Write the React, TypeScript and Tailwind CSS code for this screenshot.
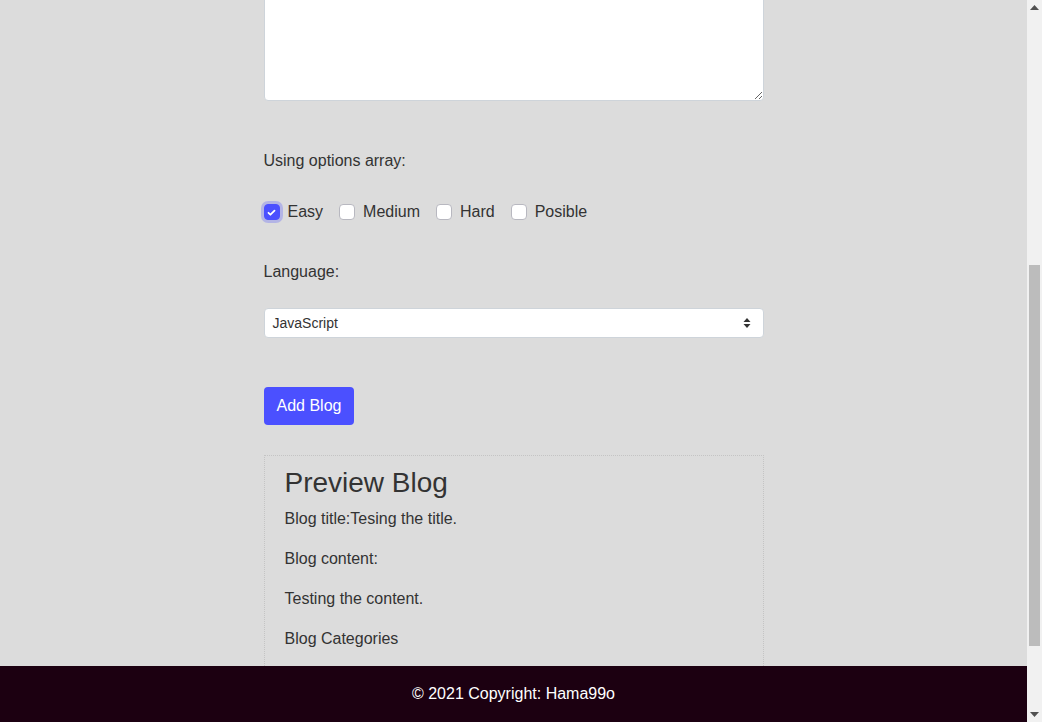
import React, { useLayoutEffect } from "react";

function Check({ checked, label }: { checked?: boolean; label: string }) {
  return (
    <label className="flex items-center mr-4">
      {checked ? (
        <span className="w-4 h-4 rounded-[4px] bg-[#4b50ff] border border-[#4b50ff] shadow-[0_0_0_3px_rgba(75,80,255,0.28)] flex items-center justify-center">
          <svg width="11" height="11" viewBox="0 0 20 20">
            <path d="M4.5 10.5l3.5 3.5 7.5-7.5" fill="none" stroke="#fff" strokeWidth="3.2" strokeLinecap="round" strokeLinejoin="round" />
          </svg>
        </span>
      ) : (
        <span className="w-4 h-4 rounded-[4px] bg-white border border-[#b8b8c0]" />
      )}
      <span className="ml-2">{label}</span>
    </label>
  );
}

export default function App() {
  useLayoutEffect(() => {
    window.scrollTo(0, 474);
  }, []);
  return (
    <div
      className="min-h-screen bg-[#dcdcdc] text-[#333333] text-base leading-6"
      style={{ fontFamily: '"Liberation Sans", Arial, sans-serif' }}
    >
      <div className="w-[1027px]">
        <div className="w-[500px] mx-auto pt-[40px] pb-[59px]">
          <h2 className="text-[28px] leading-[34px] mb-6">Add a New Blog</h2>
          <div className="mb-2">Blog title:</div>
          <input
            className="block w-full h-[38px] bg-white border border-[#ced4da] rounded-[4px] px-3 mb-6"
            defaultValue="Tesing the title."
          />
          <div className="mb-2">Blog content:</div>
          <textarea
            className="block w-full h-[351px] bg-white border border-[#ced4da] rounded-[4px] px-3 py-2"
            defaultValue=""
          />
          <div className="mt-[48px]">Using options array:</div>
          <div className="flex items-center mt-[27px]">
            <Check checked label="Easy" />
            <Check label="Medium" />
            <Check label="Hard" />
            <Check label="Posible" />
          </div>
          <div className="mt-[36px]">Language:</div>
          <div className="mt-[24px] h-[30px] bg-white border border-[#ced4da] rounded-[4px] flex items-center justify-between pl-2 pr-[12px] text-[14px]">
            <span>JavaScript</span>
            <svg width="8" height="12" viewBox="0 0 8 12">
              <path d="M4 1L7.5 5H0.5Z" fill="#333" />
              <path d="M4 11L7.5 7H0.5Z" fill="#333" />
            </svg>
          </div>
          <button className="mt-[49px] h-[38px] px-[13px] bg-[#4b50ff] text-white rounded-[4px] block">
            Add Blog
          </button>
          <div className="mt-[30px] border border-dotted border-[#c4c4c4] px-5 pt-[10px] pb-[10px]">
            <h2 className="text-[28px] leading-[34px] mb-[7px]">Preview Blog</h2>
            <p className="mb-4">Blog title:Tesing the title.</p>
            <p className="mb-4">Blog content:</p>
            <p className="mb-4">Testing the content.</p>
            <p className="mb-4">Blog Categories</p>
            <ul className="mb-4 list-disc pl-8">
              <li>Easy</li>
            </ul>
            <p className="mb-4">Blog language:</p>
            <p>JavaScript</p>
          </div>
        </div>
      </div>
      <footer className="fixed bottom-0 left-0 w-[1027px] h-[56px] bg-[#1c0011] text-white flex items-center justify-center">
        © 2021 Copyright: Hama99o
      </footer>
      <div className="fixed top-0 right-0 bottom-0 w-[15px] bg-[#f1f1f1] flex flex-col">
        <div className="h-[15px] flex items-center justify-center">
          <svg width="9" height="5" viewBox="0 0 9 5">
            <path d="M4.5 0L9 5H0Z" fill="#505050" />
          </svg>
        </div>
        <div className="flex-1 pt-[250px] pl-[2px] pr-[2px]">
          <div className="h-[381px] w-[11px] bg-[#bcbcbc]" />
        </div>
        <div className="h-[15px] flex items-center justify-center">
          <svg width="9" height="5" viewBox="0 0 9 5">
            <path d="M4.5 5L9 0H0Z" fill="#505050" />
          </svg>
        </div>
      </div>
    </div>
  );
}
